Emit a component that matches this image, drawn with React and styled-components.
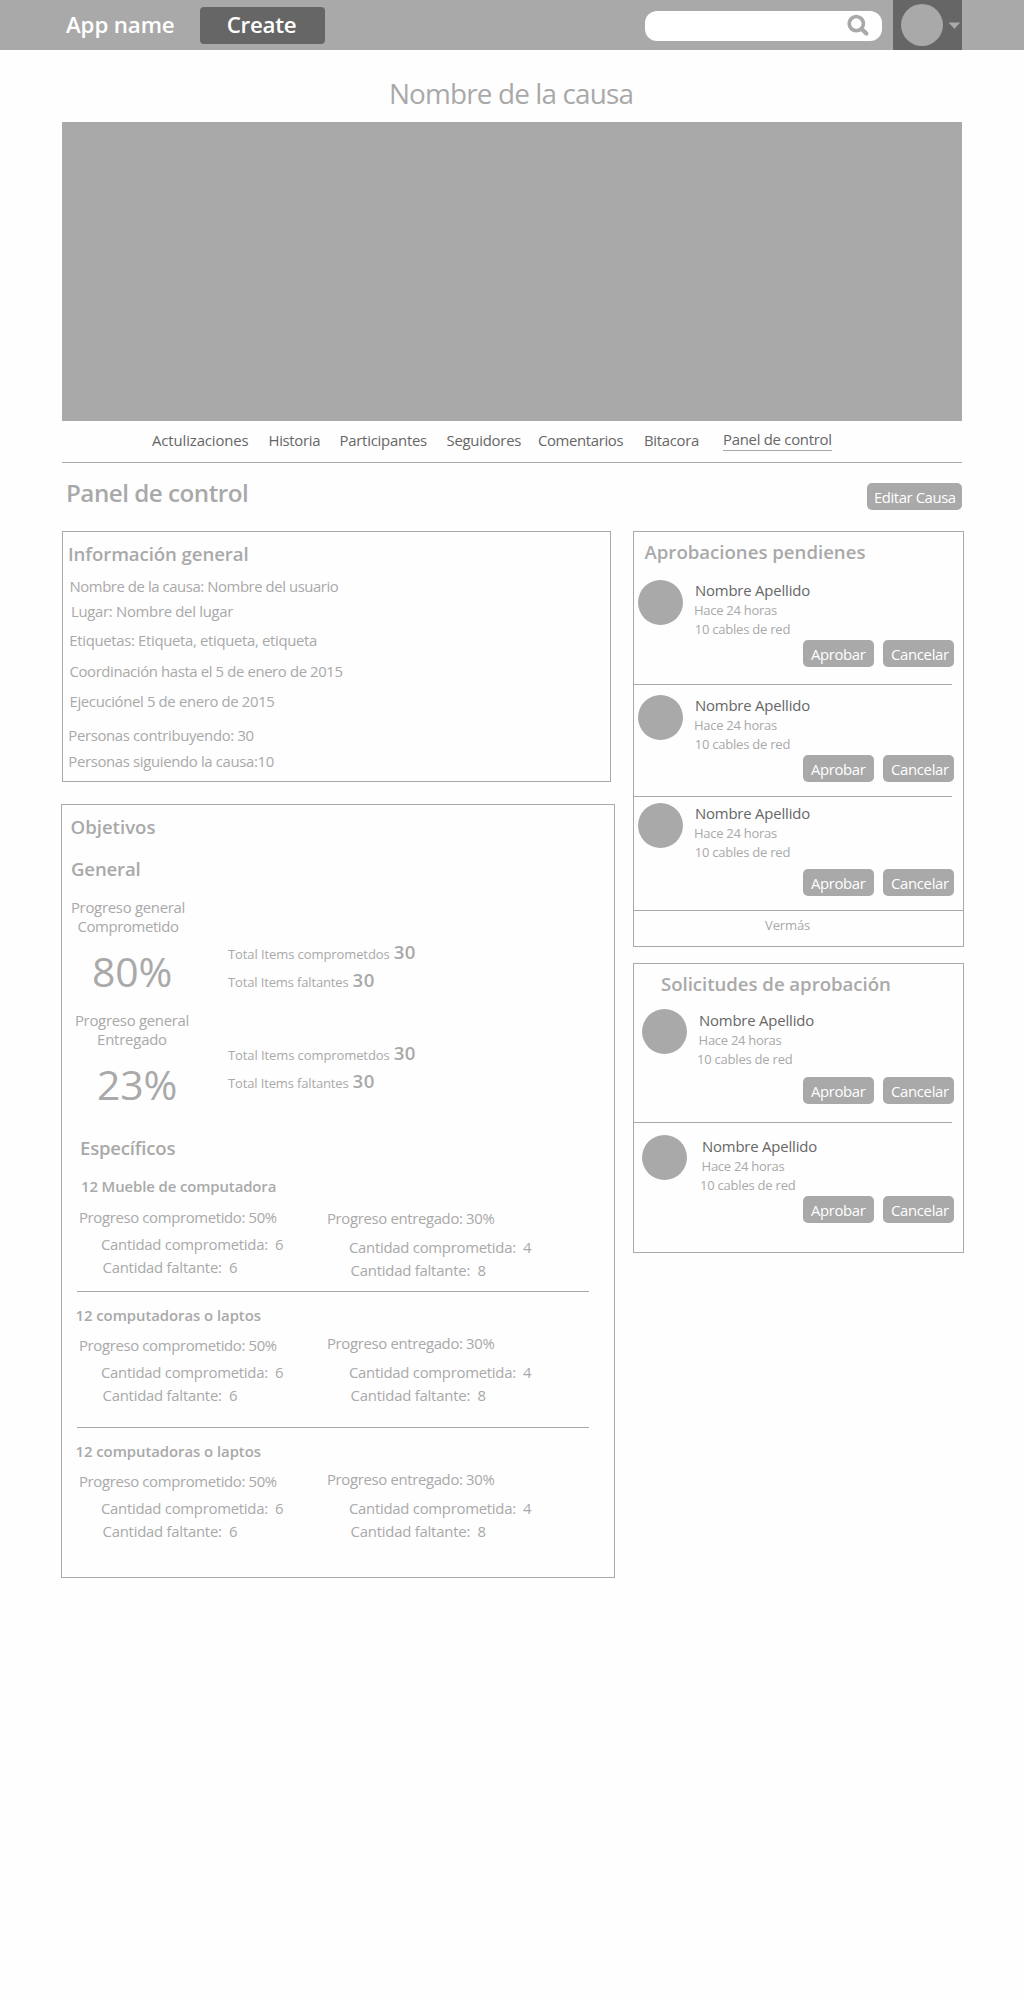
import React from 'react';
import styled, { createGlobalStyle, css } from 'styled-components';

const GREY = '#a9a9a9';
const DARK = '#666666';

const GlobalStyle = createGlobalStyle`
  * { box-sizing: border-box; }
  body {
    margin: 0;
    background: #fefefe;
    color: ${GREY};
    font-family: "Open Sans", "Noto Sans", sans-serif;
  }
  h1, h2, h3, h4, p { margin: 0; font-weight: 400; }
  button { border: 0; padding: 0; font-family: inherit; cursor: pointer; }
`;

const spaced = css`
  margin-top: ${(p) => p.$gap || 0}px;
  padding-left: ${(p) => p.$indent || 0}px;
  letter-spacing: ${(p) => p.$track || 0}px;
  white-space: pre;
`;

/* Header */
const Header = styled.header`
  display: flex;
  align-items: center;
  height: 50px;
  padding: 0 62px 0 66px;
  background: ${GREY};
`;
const Brand = styled.div`
  width: 134px;
  padding-bottom: 1px;
  color: #fff;
  font-size: 22.3px;
  font-weight: 600;
  line-height: 30px;
  letter-spacing: -0.12px;
`;
const CreateButton = styled.button`
  width: 125px;
  height: 37px;
  padding: 0 2px 1px 0;
  border-radius: 4px;
  background: ${DARK};
  color: #fff;
  font-size: 22.3px;
  font-weight: 600;
  line-height: 30px;
  letter-spacing: -0.28px;
`;
const SearchBox = styled.div`
  display: flex;
  justify-content: flex-end;
  width: 237px;
  height: 30px;
  margin: 2px 11px 0 auto;
  padding: 3px 12px 0 0;
  border-radius: 12px;
  background: #fff;
`;
const UserMenu = styled.div`
  display: flex;
  align-items: center;
  gap: 5px;
  width: 69px;
  height: 50px;
  padding-left: 8px;
  background: ${DARK};
`;

const Avatar = styled.div`
  flex: none;
  width: ${(p) => p.$size}px;
  height: ${(p) => p.$size}px;
  border-radius: 50%;
  background: ${GREY};
`;

/* Cause */
const Page = styled.main`
  width: 900px;
  margin-left: 62px;
`;
const CauseTitle = styled.h1`
  margin: 24px 0 10px;
  padding-right: 2px;
  font-size: 27.9px;
  line-height: 38px;
  letter-spacing: -0.85px;
  text-align: center;
`;
const Cover = styled.div`
  height: 299px;
  background: ${GREY};
`;
const Tabs = styled.nav`
  display: grid;
  grid-template-columns: 116.5px 71px 107px 91.5px 106px 79px auto;
  justify-content: start;
  align-items: start;
  height: 42px;
  padding-left: 90px;
  border-bottom: 1px solid ${GREY};
`;
const Tab = styled.a`
  margin-top: 9px;
  color: ${DARK};
  font-size: 14.9px;
  line-height: 20px;
  letter-spacing: ${(p) => p.$track}px;
  white-space: nowrap;
`;
const ActiveTab = styled(Tab)`
  height: 22px;
  margin-top: 8px;
  border-bottom: 1px solid ${GREY};
`;
const PanelHead = styled.div`
  display: flex;
  justify-content: space-between;
  align-items: flex-start;
  height: 68px;
`;
const PanelTitle = styled.h2`
  margin: 14px 0 0 4px;
  font-size: 24.2px;
  font-weight: 600;
  line-height: 32px;
  letter-spacing: -0.5px;
`;

const Button = styled.button`
  width: 71.5px;
  height: 27px;
  padding: 1px 0 0 8.5px;
  border-radius: 5px;
  background: ${GREY};
  color: #fff;
  font-size: 14.9px;
  line-height: 26px;
  letter-spacing: ${(p) => p.$track}px;
  text-align: left;
  white-space: nowrap;
`;
const EditButton = styled(Button)`
  width: 95px;
  margin-top: 20px;
  padding: 0 0 0 7px;
`;

/* Cards */
const Columns = styled.div`
  display: flex;
  gap: 18px;
  margin-left: -1px;
`;
const MainColumn = styled.div`
  flex: none;
  width: 554px;
`;
const SideColumn = styled.aside`
  flex: none;
  display: flex;
  flex-direction: column;
  gap: 16px;
  width: 331px;
`;
const Card = styled.section`
  border: 1px solid ${GREY};
`;
const InfoCard = styled(Card)`
  width: 549px;
  height: 251px;
  margin: 0 0 22px 1px;
  padding: 9px 0 0 4.5px;
`;
const GoalsCard = styled(Card)`
  height: 774px;
  padding-top: 9px;
`;
const SideCard = styled(Card)`
  padding-top: 7px;
`;
const CardTitle = styled.h3`
  ${spaced}
  font-size: 18.6px;
  font-weight: 600;
  line-height: 26px;
`;
const SideTitle = styled(CardTitle)`
  margin-bottom: 1px;
`;
const Line = styled.p`
  ${spaced}
  font-size: 14.9px;
  line-height: 20px;
`;

/* Overall progress */
const Progress = styled.div`
  display: flex;
  align-items: flex-start;
  height: 97px;
  margin-top: 16px;
  padding-left: ${(p) => p.$indent}px;
`;
const Gauge = styled.div`
  width: 115px;
  font-size: 14.9px;
  line-height: 19px;
  text-align: center;
  white-space: nowrap;
`;
const GaugeLabel = styled.div`
  letter-spacing: ${(p) => p.$track}px;
`;
const Percent = styled.div`
  margin-top: 10px;
  padding-left: ${(p) => p.$indent}px;
  font-size: 40.9px;
  line-height: 50px;
  letter-spacing: ${(p) => p.$track}px;
`;
const Totals = styled.div`
  margin: ${(p) => p.$top}px 0 0 auto;
  width: 386px;
`;
const Total = styled.div`
  display: flex;
  align-items: baseline;
  gap: 4px;
  height: 28px;
  font-size: 13px;
  line-height: 18px;
  letter-spacing: ${(p) => p.$track}px;
`;
const TotalCount = styled.strong`
  font-size: 18.6px;
  font-weight: 600;
  line-height: 26px;
  letter-spacing: 0.5px;
`;

/* Specific goals */
const Goals = styled.div`
  padding-top: 15px;
`;
const Goal = styled.article`
  height: ${(p) => (p.$first ? 115 : 135)}px;
  padding-top: ${(p) => (p.$first ? 0 : 13)}px;
`;
const GoalName = styled.h4`
  ${spaced}
  margin-bottom: ${(p) => (p.$first ? 0 : 1)}px;
  font-size: 14.9px;
  font-weight: 600;
  line-height: 20px;
`;
const GoalColumns = styled.div`
  display: grid;
  grid-template-columns: 248px 1fr;
  padding-left: 17px;
`;
const GoalRule = styled.hr`
  height: 1px;
  margin: 0 25px 0 15px;
  border: 0;
  background: ${GREY};
`;

/* Requests */
const Request = styled.article`
  height: ${(p) => p.$height}px;
  padding: ${(p) => p.$top}px 9px 0 ${(p) => p.$left}px;
`;
const Person = styled.div`
  display: flex;
  align-items: flex-start;
  gap: 10px;
`;
const Details = styled.div`
  height: 58px;
  margin-top: ${(p) => p.$drop || 0}px;
`;
const PersonName = styled.p`
  ${spaced}
  color: ${DARK};
  font-size: 14.9px;
  line-height: 20px;
`;
const Note = styled.p`
  ${spaced}
  font-size: 13px;
  line-height: 18px;
`;
const Actions = styled.div`
  display: flex;
  justify-content: flex-end;
  gap: 8.5px;
  margin-top: ${(p) => p.$gap}px;
`;
const Rule = styled.hr`
  height: 1px;
  margin: 0 ${(p) => (p.$full ? 0 : 11)}px 0 0;
  border: 0;
  background: ${GREY};
`;
const More = styled.a`
  display: block;
  height: 35px;
  padding: 5px 0 0 131px;
  font-size: 13px;
  line-height: 18px;
  letter-spacing: -0.1px;
`;

const TABS = [
  ['Actulizaciones', -0.12],
  ['Historia', -0.33],
  ['Participantes', -0.24],
  ['Seguidores', -0.25],
  ['Comentarios', -0.36],
  ['Bitacora', -0.3],
];

const INFO = [
  ['Nombre de la causa: Nombre del usuario', 9, 2, -0.43],
  ['Lugar: Nombre del lugar', 5, 3.5, -0.3],
  ['Etiquetas: Etiqueta, etiqueta, etiqueta', 9, 1.8, -0.33],
  ['Coordinación hasta el 5 de enero de 2015', 11, 2, -0.38],
  ['Ejecuciónel 5 de enero de 2015', 10, 2, -0.35],
  ['Personas contribuyendo: 30', 14, 0.8, -0.34],
  ['Personas siguiendo la causa:10', 6, 0.8, -0.34],
];

const GOALS = [
  { name: '12 Mueble de computadora', indent: 19, track: -0.1, left: [11, 7, 3], right: [12, 9, 3] },
  { name: '12 computadoras o laptos', indent: 13.5, track: -0.05, left: [9, 7, 3], right: [7, 9, 3] },
  { name: '12 computadoras o laptos', indent: 13.5, track: -0.05, left: [9, 7, 3], right: [7, 9, 3] },
];

const PENDING = [
  { height: 118, top: 14, gap: 2 },
  { height: 111, top: 10, gap: 2 },
  { height: 113, top: 6, gap: 8 },
];

const SENT = [
  { height: 124, top: 11, gap: 9, x: 0 },
  { height: 129, top: 12, gap: 2, x: 3 },
];

function SearchIcon() {
  return (
    <svg width="23" height="23" viewBox="0 0 23 23" fill="none" stroke={GREY} aria-label="Buscar">
      <circle cx="9.3" cy="9.6" r="7.1" strokeWidth="3.7" />
      <path d="M14.9 15.2 L19.4 19.6" strokeWidth="4.2" strokeLinecap="round" />
    </svg>
  );
}

function Caret() {
  return (
    <svg width="13" height="7" viewBox="0 0 13 7" aria-hidden="true">
      <path d="M0.5 0.6 H12.3 L6.4 6.8 Z" fill={GREY} />
    </svg>
  );
}

function GoalItem({ goal, first }) {
  return (
    <Goal $first={first}>
      <GoalName $first={first} $indent={goal.indent} $track={goal.track}>{goal.name}</GoalName>
      <GoalColumns>
        <div>
          <Line $gap={goal.left[0]} $track={-0.35}>Progreso comprometido: 50%</Line>
          <Line $gap={goal.left[1]} $indent={22} $track={-0.27}>{'Cantidad comprometida:  6'}</Line>
          <Line $gap={goal.left[2]} $indent={23.5} $track={-0.24}>{'Cantidad faltante:  6'}</Line>
        </div>
        <div>
          <Line $gap={goal.right[0]} $track={-0.34}>Progreso entregado: 30%</Line>
          <Line $gap={goal.right[1]} $indent={22} $track={-0.27}>{'Cantidad comprometida:  4'}</Line>
          <Line $gap={goal.right[2]} $indent={23.5} $track={-0.22}>{'Cantidad faltante:  8'}</Line>
        </div>
      </GoalColumns>
    </Goal>
  );
}

function RequestItem({ item, left, drop, x, notes }) {
  return (
    <Request $height={item.height} $top={item.top} $left={left}>
      <Person>
        <Avatar $size={45} />
        <Details $drop={drop}>
          <PersonName $indent={x + 2} $track={-0.18}>Nombre Apellido</PersonName>
          <Note $gap={1} $indent={x + notes[0]} $track={-0.28}>Hace 24 horas</Note>
          <Note $gap={1} $indent={x + notes[1]} $track={-0.22}>10 cables de red</Note>
        </Details>
      </Person>
      <Actions $gap={item.gap}>
        <Button $track={-0.37}>Aprobar</Button>
        <Button $track={-0.33}>Cancelar</Button>
      </Actions>
    </Request>
  );
}

function TotalsList({ top }) {
  return (
    <Totals $top={top}>
      <Total $track={-0.09}>Total Items comprometdos <TotalCount>30</TotalCount></Total>
      <Total $track={-0.14}>Total Items faltantes <TotalCount>30</TotalCount></Total>
    </Totals>
  );
}

export default function App() {
  return (
    <>
      <GlobalStyle />
      <Header>
        <Brand>App name</Brand>
        <CreateButton>Create</CreateButton>
        <SearchBox><SearchIcon /></SearchBox>
        <UserMenu>
          <Avatar $size={42} />
          <Caret />
        </UserMenu>
      </Header>
      <Page>
        <CauseTitle>Nombre de la causa</CauseTitle>
        <Cover />
        <Tabs>
          {TABS.map(([label, track]) => <Tab key={label} $track={track}>{label}</Tab>)}
          <ActiveTab $track={-0.27}>Panel de control</ActiveTab>
        </Tabs>
        <PanelHead>
          <PanelTitle>Panel de control</PanelTitle>
          <EditButton $track={-0.43}>Editar Causa</EditButton>
        </PanelHead>
        <Columns>
          <MainColumn>
            <InfoCard>
              <CardTitle $indent={0.5} $track={-0.08}>Información general</CardTitle>
              {INFO.map(([text, gap, indent, track]) => (
                <Line key={text} $gap={gap} $indent={indent} $track={track}>{text}</Line>
              ))}
            </InfoCard>
            <GoalsCard>
              <CardTitle $indent={8.5}>Objetivos</CardTitle>
              <CardTitle $gap={16} $indent={9} $track={-0.16}>General</CardTitle>
              <Progress $indent={8.5}>
                <Gauge>
                  <GaugeLabel $track={-0.27}>Progreso general</GaugeLabel>
                  <GaugeLabel $track={-0.36}>Comprometido</GaugeLabel>
                  <Percent $indent={8} $track={-0.2}>80%</Percent>
                </Gauge>
                <TotalsList top={41} />
              </Progress>
              <Progress $indent={12.5}>
                <Gauge>
                  <GaugeLabel $track={-0.27}>Progreso general</GaugeLabel>
                  <GaugeLabel $track={-0.2}>Entregado</GaugeLabel>
                  <Percent $indent={10} $track={-0.2}>23%</Percent>
                </Gauge>
                <TotalsList top={29} />
              </Progress>
              <CardTitle $gap={27} $indent={18} $track={-0.22}>Específicos</CardTitle>
              <Goals>
                {GOALS.map((goal, i) => (
                  <React.Fragment key={i}>
                    {i > 0 && <GoalRule />}
                    <GoalItem goal={goal} first={i === 0} />
                  </React.Fragment>
                ))}
              </Goals>
            </GoalsCard>
          </MainColumn>
          <SideColumn>
            <SideCard>
              <SideTitle $indent={10.5}>Aprobaciones pendienes</SideTitle>
              {PENDING.map((item, i) => (
                <React.Fragment key={i}>
                  <RequestItem item={item} left={4} drop={0} x={0} notes={[1, 1.7]} />
                  <Rule $full={i === PENDING.length - 1} />
                </React.Fragment>
              ))}
              <More>Vermás</More>
            </SideCard>
            <SideCard>
              <SideTitle $indent={27} $track={-0.03}>Solicitudes de aprobación</SideTitle>
              {SENT.map((item, i) => (
                <React.Fragment key={i}>
                  {i > 0 && <Rule />}
                  <RequestItem item={item} left={8} drop={1} x={item.x} notes={[1.6, -0.5 + 0.5]} />
                </React.Fragment>
              ))}
            </SideCard>
          </SideColumn>
        </Columns>
      </Page>
    </>
  );
}
